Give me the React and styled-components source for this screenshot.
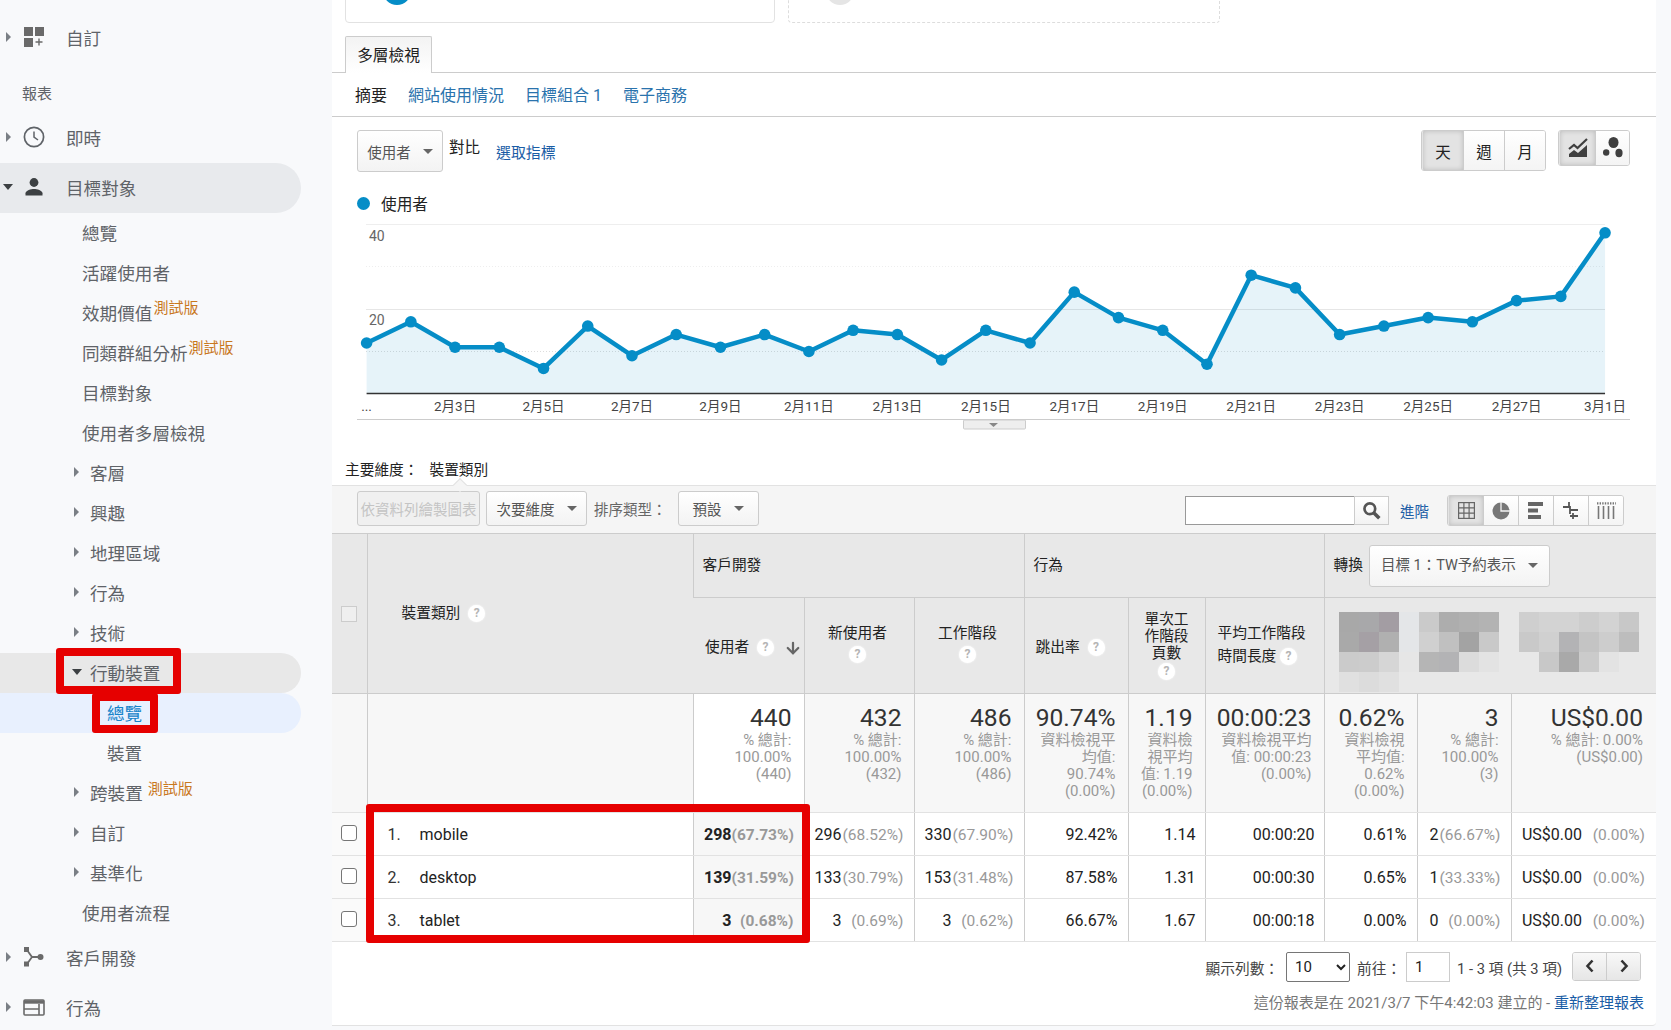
import React from 'react';
import styled, { createGlobalStyle } from 'styled-components';
import { ArrowDown } from 'lucide-react';

const FONT = `Roboto, "Noto Sans CJK TC", sans-serif`;

const GlobalStyle = createGlobalStyle`
  html, body { margin: 0; padding: 0; background: #f8f9fb; }
  body { font-family: ${FONT}; font-size: 15px; color: #222; }
  * { box-sizing: border-box; }
`;

const Page = styled.div`
  display: flex;
  width: 1671px;
  height: 1030px;
  overflow: hidden;
  background: #f8f9fb;
`;

/* ---------- sidebar ---------- */

const Sidebar = styled.nav`
  width: 332px;
  flex: none;
  padding-top: 13px;
  background: #f8f9fb;
  color: #5f6368;
  font-size: 17.6px;
`;

const NavRow = styled.div`
  position: relative;
  display: flex;
  align-items: center;
  width: 301px;
  height: ${({ $top }) => ($top ? '50px' : '40px')};
  padding: 0 0 2px ${({ $indent }) => $indent}px;
  border-radius: 0 25px 25px 0;
  white-space: nowrap;
  background: ${({ $bg }) => $bg || 'transparent'};
  color: ${({ $active }) => ($active ? '#1583c9' : 'inherit')};
`;

const NavLabel = styled.div`
  height: 50px;
  padding: 21px 0 0 22px;
  font-size: 15px;
  line-height: 20px;
`;

const Caret = styled.span`
  flex: none;
  width: 0;
  height: 0;
  margin-right: ${({ $gap }) => $gap}px;
  border-style: solid;
  ${({ $open }) =>
    $open
      ? 'border-width: 6px 5px 0 5px; border-color: #3c4043 transparent transparent transparent;'
      : 'border-width: 5px 0 5px 5px; border-color: transparent transparent transparent #7a7f85;'}
`;

const IconSlot = styled.span`
  flex: none;
  display: flex;
  justify-content: center;
  width: 22px;
  margin-right: 21px;
`;

const Beta = styled.span`
  align-self: flex-start;
  margin: ${({ $top }) => $top}px 0 0 ${({ $left }) => $left}px;
  font-size: 15px;
  line-height: 18px;
  color: #c9781e;
`;

const RedBox = styled.div`
  position: absolute;
  left: ${({ $x }) => $x}px;
  top: ${({ $y }) => $y}px;
  width: ${({ $w }) => $w}px;
  height: ${({ $h }) => $h}px;
  border: 8px solid #e60000;
  border-radius: 3px;
  z-index: 2;
  pointer-events: none;
`;

/* ---------- main column ---------- */

const Main = styled.main`
  width: 1324px;
  height: 1026px;
  flex: none;
  background: #fff;
  border-bottom: 1px solid #e2e2e2;
  border-radius: 0 0 4px 0;
`;

const CardsRow = styled.div`
  display: flex;
  align-items: flex-end;
  gap: 13px;
  height: 23px;
  padding-left: 13px;
  overflow: hidden;
`;

const Card = styled.div`
  display: flex;
  align-items: flex-end;
  width: ${({ $w }) => $w}px;
  height: 60px;
  flex: none;
  padding: 0 0 17px 37px;
  border: 1px ${({ $dashed }) => ($dashed ? 'dashed #ddd' : 'solid #e2e2e2')};
  border-radius: 0 0 4px 4px;
`;

const CardDot = styled.span`
  width: 28px;
  height: 28px;
  border-radius: 50%;
  background: ${({ $color }) => $color};
`;

const TabBar = styled.div`
  height: 50px;
  padding: 13px 0 0 13px;
  border-bottom: 1px solid #ccc;
`;

const Tab = styled.div`
  display: flex;
  align-items: center;
  justify-content: center;
  width: 87px;
  height: 37px;
  padding-bottom: 2px;
  border: 1px solid #ccc;
  border-bottom: 0;
  border-radius: 2px 2px 0 0;
  background: linear-gradient(#f3f3f3, #fff);
  font-size: 15.7px;
  color: #222;
`;

const SubNav = styled.div`
  display: flex;
  align-items: center;
  gap: 21px;
  height: 44px;
  padding: 0 0 2px 23px;
  border-bottom: 1px solid #ccc;
  font-size: 16px;
`;

const SubLink = styled.span`
  color: ${({ $current }) => ($current ? '#222' : '#2a73ad')};
`;

const ControlBar = styled.div`
  display: flex;
  justify-content: space-between;
  align-items: flex-start;
  height: 76px;
  padding: 13px 26px 0 25px;
`;

const ControlGroup = styled.div`
  display: flex;
  align-items: flex-start;
`;

const Button = styled.div`
  display: flex;
  align-items: center;
  justify-content: center;
  gap: 12px;
  width: ${({ $w }) => $w}px;
  height: ${({ $h }) => $h || 35}px;
  flex: none;
  margin-left: ${({ $ml }) => $ml || 0}px;
  border: 1px solid #ccc;
  border-radius: 3px;
  background: ${({ $disabled }) => ($disabled ? '#f0f0f0' : 'linear-gradient(#fff, #f3f3f3)')};
  color: ${({ $disabled }) => ($disabled ? '#c4c4c4' : '#555')};
  font-size: 14.5px;
  white-space: nowrap;
  overflow: hidden;
`;

const DownTri = styled.span`
  width: 0;
  height: 0;
  border-style: solid;
  border-width: 5px 5px 0 5px;
  border-color: #666 transparent transparent transparent;
`;

const Compare = styled.span`
  margin: 7px 16px 0 6px;
  font-size: 15.5px;
  line-height: 22px;
  color: #222;
`;

const PickLink = styled.a`
  margin-top: 12px;
  font-size: 14.9px;
  line-height: 22px;
  color: #1a5da6;
`;

const Segments = styled.div`
  display: flex;
  height: ${({ $h }) => $h}px;
  margin-left: ${({ $ml }) => $ml || 0}px;
  border: 1px solid #ccc;
  border-radius: 3px;
  overflow: hidden;
`;

const Segment = styled.div`
  display: flex;
  align-items: center;
  justify-content: center;
  width: ${({ $w }) => $w}px;
  flex: none;
  border-left: 1px solid ${({ $first }) => ($first ? 'transparent' : '#ccc')};
  background: ${({ $on }) => ($on ? '#e3e3e3' : 'linear-gradient(#fff, #f4f4f4)')};
  box-shadow: ${({ $on }) => ($on ? 'inset 0 0 5px rgba(0,0,0,.18)' : 'none')};
  font-size: 15.5px;
  color: #222;
`;

const Legend = styled.div`
  display: flex;
  align-items: center;
  gap: 11px;
  height: 20px;
  padding-left: 25px;
  font-size: 15.7px;
  color: #222;
`;

const LegendDot = styled.span`
  width: 13px;
  height: 13px;
  border-radius: 50%;
  background: #058dc7;
`;

const ChartBox = styled.div`
  height: 218px;
  svg { display: block; }
`;

const DimensionRow = styled.div`
  position: relative;
  display: flex;
  align-items: flex-end;
  gap: 11px;
  height: 55px;
  padding: 0 0 5px 13px;
  border-bottom: 1px solid #e2e2e2;
  font-size: 14.7px;
  line-height: 20px;
  color: #222;

  &::after {
    content: '';
    position: absolute;
    left: 123px;
    bottom: -5px;
    width: 9px;
    height: 9px;
    background: #f5f5f5;
    border-top: 1px solid #e2e2e2;
    border-left: 1px solid #e2e2e2;
    transform: rotate(45deg);
  }
`;

const Toolbar = styled.div`
  display: flex;
  justify-content: space-between;
  align-items: flex-start;
  height: 47px;
  padding: 5px 32px 0 25px;
  background: #f5f5f5;
`;

const ToolGroup = styled.div`
  display: flex;
  align-items: center;
  margin-top: ${({ $mt }) => $mt || 0}px;
`;

const ToolLabel = styled.span`
  margin: 0 11px 0 7px;
  font-size: 14.5px;
  color: #666;
  white-space: nowrap;
`;

const SearchInput = styled.input`
  width: 169px;
  height: 29px;
  padding: 0 4px;
  border: 1px solid #999;
  border-right: 0;
  background: #fff;
  outline: none;
`;

const SearchButton = styled.div`
  display: flex;
  align-items: center;
  justify-content: center;
  width: 35px;
  height: 29px;
  border: 1px solid #ccc;
  background: linear-gradient(#fff, #f3f3f3);
`;

const AdvancedLink = styled.a`
  margin: 0 18px 0 11px;
  font-size: 14.5px;
  color: #1a5da6;
`;

/* ---------- table ---------- */

const TableWrap = styled.div`
  position: relative;
`;

const Table = styled.table`
  width: 1324px;
  table-layout: fixed;
  border-collapse: collapse;
  font-family: ${FONT};
`;

const Col = styled.col`
  width: ${({ $w }) => $w}px;
`;

const Th = styled.th`
  height: ${({ $h }) => $h || 'auto'}${({ $h }) => ($h ? 'px' : '')};
  padding: ${({ $pad }) => $pad || '0 9px'};
  border: 1px solid #ccc;
  border-width: 1px 0 1px 1px;
  background: #e8e8e8;
  font-size: 14.7px;
  font-weight: 400;
  line-height: ${({ $lh }) => $lh || 17}px;
  text-align: ${({ $center }) => ($center ? 'center' : 'left')};
  vertical-align: middle;
  color: #222;
  overflow: hidden;

  &:first-child { border-left: 0; }
`;

const HeadFlex = styled.div`
  display: flex;
  align-items: center;
  gap: ${({ $gap }) => $gap ?? 8}px;
  white-space: nowrap;
`;

const Help = styled.span`
  display: inline-flex;
  align-items: center;
  justify-content: center;
  width: 17px;
  height: 17px;
  flex: none;
  border-radius: 50%;
  background: #fff;
  box-shadow: 0 0 2px #fff;
  font-size: 12px;
  font-weight: 700;
  color: #b5b5b5;
  vertical-align: middle;
`;

const HeadCheck = styled.span`
  display: block;
  width: 16px;
  height: 16px;
  margin: 0 auto;
  border: 1px solid #ccc;
  background: #efefef;
`;

const MosaicCell = styled(Th)`
  padding: 0;
  svg { display: block; }
`;

const TotalTd = styled.td`
  height: 119px;
  padding: 10px ${({ $pr }) => $pr || 12}px 0 4px;
  border-left: 1px solid #ccc;
  border-bottom: 1px solid #e2e2e2;
  background: ${({ $white }) => ($white ? '#fff' : '#f7f7f7')};
  text-align: right;
  vertical-align: top;

  &:first-child { border-left: 0; }
`;

const BigValue = styled.div`
  font-size: 24.6px;
  line-height: 28px;
  color: #333;
  white-space: nowrap;
`;

const SubLine = styled.div`
  font-size: 15px;
  line-height: 17px;
  color: #999;
  white-space: nowrap;
`;

const Td = styled.td`
  height: 43px;
  padding: 0 ${({ $pr }) => $pr ?? 10}px 0 0;
  border-left: 1px solid #ccc;
  border-bottom: 1px solid #e2e2e2;
  background: ${({ $shade }) => ($shade ? '#f7f7f7' : '#fff')};
  font-size: 16px;
  text-align: right;
  color: #222;
  white-space: nowrap;

  &:first-child { border-left: 0; padding: 0; text-align: center; background: #fafafa; }
`;

const NameCell = styled(Td)`
  padding: 0;
  text-align: left;
`;

const RowNo = styled.span`
  display: inline-block;
  width: 32px;
  margin-left: 20px;
  color: #333;
`;

const Num = styled.span`
  font-weight: ${({ $bold }) => ($bold ? 700 : 400)};
`;

const Pct = styled.span`
  display: inline-block;
  width: ${({ $w }) => $w || 62}px;
  font-size: 15.5px;
  text-align: right;
  color: #999;
  font-weight: ${({ $bold }) => ($bold ? 700 : 400)};
`;

const RowCheck = styled.input`
  appearance: none;
  display: block;
  width: 16px;
  height: 16px;
  margin: -2px auto 0;
  border: 1px solid #767676;
  border-radius: 3px;
  background: #fff;
`;

/* ---------- footer ---------- */

const PagerRow = styled.div`
  display: flex;
  justify-content: flex-end;
  align-items: center;
  height: 30px;
  margin-top: 10px;
  padding-right: 15px;
  font-size: 14.7px;
  color: #444;
  white-space: nowrap;
`;

const PageSelect = styled.select`
  width: 64px;
  height: 30px;
  margin: 0 7px;
  padding-left: 4px;
  border: 1px solid #767676;
  border-radius: 2px;
  background: #fff;
  font-family: ${FONT};
  font-size: 15px;
  color: #222;
`;

const PageInput = styled.input`
  width: 44px;
  height: 30px;
  margin: 0 7px 0 5px;
  padding-left: 8px;
  border: 1px solid #ccc;
  font-family: ${FONT};
  font-size: 15px;
  color: #222;
`;

const PagerButtons = styled.div`
  display: flex;
  width: 69px;
  height: 29px;
  margin: -2px 0 0 10px;
  border: 1px solid #ccc;
  border-radius: 3px;
  overflow: hidden;
`;

const PagerButton = styled.div`
  display: flex;
  flex: 1;
  align-items: center;
  justify-content: center;
  background: linear-gradient(#f8f8f8, #e6e6e6);

  & + & { border-left: 1px solid #ccc; }
`;

const Stamp = styled.div`
  margin-top: 11px;
  padding-right: 12px;
  font-size: 15px;
  line-height: 20px;
  text-align: right;
  color: #777;
`;

const RefreshLink = styled.a`
  color: #1a5da6;
`;

/* ---------- drawings ---------- */

const DashboardIcon = () => (
  <svg width="20" height="20" viewBox="0 0 20 20" fill="#6a6a6a">
    <rect x="0" y="0" width="9" height="9" />
    <rect x="11" y="0" width="9" height="9" />
    <rect x="0" y="11" width="9" height="9" />
    <path d="M15 11.5v7M11.5 15h7" stroke="#6a6a6a" strokeWidth="1.4" />
  </svg>
);

const ClockIcon = () => (
  <svg width="22" height="22" viewBox="0 0 22 22" fill="none" stroke="#5f6368">
    <circle cx="11" cy="11" r="9.6" strokeWidth="1.7" />
    <path d="M11 5.5V11l4 3" strokeWidth="1.5" />
  </svg>
);

const PersonIcon = () => (
  <svg width="20" height="20" viewBox="0 0 20 20" fill="#3c4043">
    <circle cx="10" cy="5.5" r="4.4" />
    <path d="M1.5 18.5v-2.2c0-3 5.6-4.4 8.5-4.4s8.5 1.4 8.5 4.4v2.2z" />
  </svg>
);

const AcquireIcon = () => (
  <svg width="20" height="20" viewBox="0 0 20 20" fill="#6a6a6a">
    <rect x="0" y="0" width="5" height="5" />
    <rect x="0" y="14.5" width="5" height="5" />
    <circle cx="16.5" cy="10" r="3" />
    <path d="M3 3l5 7h8M8 10l-5 7" fill="none" stroke="#6a6a6a" strokeWidth="1.8" />
  </svg>
);

const BehaviorIcon = () => (
  <svg width="22" height="17" viewBox="0 0 22 17" fill="none" stroke="#6a6a6a" strokeWidth="1.6">
    <rect x="1" y="1" width="20" height="15" rx="1" />
    <path d="M1 3h20" strokeWidth="3.4" />
    <path d="M1 10h15M16 5v11" />
  </svg>
);

const AreaIcon = () => (
  <svg width="20" height="20" viewBox="0 0 20 20">
    <path d="M1 11l5-4 3.5 3L19 1" fill="none" stroke="#3f3f3f" strokeWidth="2.2" />
    <path d="M1 16l5-4 4 3 9-8v12H1z" fill="#3f3f3f" />
  </svg>
);

const DotsIcon = () => (
  <svg width="22" height="24" viewBox="0 0 22 24" fill="#3f3f3f">
    <ellipse cx="11.5" cy="6.5" rx="5" ry="5.6" />
    <circle cx="4.2" cy="16.5" r="3.2" />
    <ellipse cx="17" cy="17" rx="3.6" ry="4.2" />
  </svg>
);

const SearchIcon = () => (
  <svg width="19" height="19" viewBox="0 0 17 17" fill="none" stroke="#555">
    <circle cx="7" cy="7" r="4.8" strokeWidth="2.4" />
    <path d="M10.5 10.5l5 5" strokeWidth="3.2" />
  </svg>
);

const GridIcon = () => (
  <svg width="17" height="17" viewBox="0 0 17 17" fill="none" stroke="#666" strokeWidth="1.2">
    <rect x=".6" y=".6" width="15.8" height="15.8" />
    <path d="M5.9.6v15.8M11.1.6v15.8M.6 5.9h15.8M.6 11.1h15.8" />
  </svg>
);

const PieIcon = () => (
  <svg width="18" height="18" viewBox="0 0 18 18">
    <circle cx="9" cy="9" r="8.5" fill="#777" />
    <path d="M9 0v9h9" fill="none" stroke="#f4f4f4" strokeWidth="1.3" />
  </svg>
);

const BarsIcon = () => (
  <svg width="16" height="17" viewBox="0 0 16 17" fill="#666">
    <rect x="0" y="0" width="15" height="4" />
    <rect x="0" y="6.5" width="10" height="4" />
    <rect x="0" y="13" width="13" height="4" />
  </svg>
);

const PivotIcon = () => (
  <svg width="16" height="17" viewBox="0 0 16 17" fill="none" stroke="#555" strokeWidth="1.8">
    <path d="M0 5h7v7M7 8h8M6 0v5M10 11v6M7 14h8" />
  </svg>
);

const ColumnsIcon = () => (
  <svg width="19" height="17" viewBox="0 0 19 17" fill="none" stroke="#777" strokeWidth="1.6">
    <path d="M0 1.4h19" strokeDasharray="1.4 1.2" strokeWidth="2.4" />
    <path d="M1.5 4v13M6.5 4v13M11.5 4v13M16.5 4v13" />
  </svg>
);

const Chevron = ({ dir }) => (
  <svg width="10" height="14" viewBox="0 0 10 14" fill="none" stroke="#333" strokeWidth="2.6">
    <path d={dir === 'left' ? 'M7.5 1.5L2.5 7l5 5.5' : 'M2.5 1.5L7.5 7l-5 5.5'} />
  </svg>
);

const VALUES = [12, 17, 11, 11, 6, 16, 9, 14, 11, 14, 10, 15, 14, 8, 15, 12, 24, 18, 15, 7, 28, 25, 14, 16, 18, 17, 22, 23, 38];
const X_LABELS = ['...', '2月3日', '2月5日', '2月7日', '2月9日', '2月11日', '2月13日', '2月15日', '2月17日', '2月19日', '2月21日', '2月23日', '2月25日', '2月27日', '3月1日'];

const LineChart = () => {
  const px = (i) => 34.6 + i * 44.23;
  const py = (v) => 180.9 - v * 4.24;
  const line = VALUES.map((v, i) => `${px(i)},${py(v)}`).join(' ');
  const last = px(VALUES.length - 1);

  return (
    <svg width="1324" height="218" viewBox="0 0 1324 218" fontFamily={FONT}>
      <line x1="34" x2={last} y1="11.5" y2="11.5" stroke="#eee" />
      <line x1="34" x2={last} y1="53.5" y2="53.5" stroke="#eee" strokeDasharray="1 2" />
      <line x1="34" x2={last} y1="96.5" y2="96.5" stroke="#e6e6e6" />
      <line x1="34" x2={last} y1="138.5" y2="138.5" stroke="#ddd" strokeDasharray="1 2" />
      <polygon points={`${px(0)},180.5 ${line} ${last},180.5`} fill="rgba(5,141,199,.1)" />
      <line x1={px(0)} x2={last} y1="180.5" y2="180.5" stroke="#333" strokeWidth="1.5" />
      <polyline points={line} fill="none" stroke="#058dc7" strokeWidth="4.5" strokeLinejoin="round" />
      {VALUES.map((v, i) => (
        <circle key={i} cx={px(i)} cy={py(v)} r="5.8" fill="#058dc7" />
      ))}
      <text x="37" y="28" fontSize="14" fill="#666">40</text>
      <text x="37" y="112" fontSize="14" fill="#666">20</text>
      {X_LABELS.map((label, i) => (
        <text key={label} x={px(i * 2)} y="198" fontSize="13.5" fill="#444" textAnchor="middle">{label}</text>
      ))}
      <line x1="25" x2="1298" y1="206.5" y2="206.5" stroke="#ccc" />
      <rect x="631.5" y="207" width="62" height="9" rx="1" fill="#eee" stroke="#ccc" />
      <path d="M657 210h9l-4.5 4z" fill="#888" />
    </svg>
  );
};

const MOSAIC_ROWS = [
  [14, ['#a8a8a8', '#a8a8aa', '#a39da3', '#e4e6e8'], 13],
  [14, ['#a9a9a9', '#a5a0a5', '#b0b0b0', '#e4e6e8'], 33],
  [14, ['#cbcbcb', '#cccccc', '#d6d6d6', '#e6e6e6'], 53],
  [14, ['#e0e0e0', '#dcdcdc', '#e0e0e0', '#e8e8e8'], 73],
  [94, ['#cacaca', '#adadad', '#b0b0b0', '#b3b3b3'], 13],
  [94, ['#d0d0d0', '#c0c0c0', '#a3a3a3', '#c9c9c9'], 33],
  [94, ['#b5b5b5', '#b3b3b5', '#dcdcdc', '#e3e3e3'], 53],
  [194, ['#cfcfcf', '#d3d3d3', '#d3d3d3', '#cdcdcd', '#d3d3d3', '#c8c8c8'], 13],
  [194, ['#c9c9c9', '#d0d0d0', '#b3b3b5', '#c4c4c4', '#cdcdcd', '#bdbdbd'], 33],
  [194, ['#e8e8e8', '#c8c8c8', '#a9a9a9', '#cbcbcb', '#e3e3e3', '#e8e8e8'], 53],
];

const Mosaic = () => (
  <svg width="331" height="94" viewBox="0 0 331 94">
    {MOSAIC_ROWS.map(([x, cells, y]) =>
      cells.map((color, i) => (
        <rect key={`${x}-${y}-${i}`} x={x + i * 20} y={y} width="20" height="20" fill={color} />
      ))
    )}
  </svg>
);

const TOTALS = [
  { value: '440', lines: ['% 總計:', '100.00%', '(440)'], white: true },
  { value: '432', lines: ['% 總計:', '100.00%', '(432)'] },
  { value: '486', lines: ['% 總計:', '100.00%', '(486)'] },
  { value: '90.74%', lines: ['資料檢視平', '均值:', '90.74%', '(0.00%)'] },
  { value: '1.19', lines: ['資料檢', '視平均', '值: 1.19', '(0.00%)'] },
  { value: '00:00:23', lines: ['資料檢視平均', '值: 00:00:23', '(0.00%)'] },
  { value: '0.62%', lines: ['資料檢視', '平均值:', '0.62%', '(0.00%)'] },
  { value: '3', lines: ['% 總計:', '100.00%', '(3)'] },
  { value: 'US$0.00', lines: ['% 總計: 0.00%', '(US$0.00)'], pr: 13 },
];

const ROWS = [
  { no: '1.', name: 'mobile', users: ['298', '(67.73%)'], fresh: ['296', '(68.52%)'], sessions: ['330', '(67.90%)'], bounce: '92.42%', pages: '1.14', time: '00:00:20', rate: '0.61%', goal: ['2', '(66.67%)'] },
  { no: '2.', name: 'desktop', users: ['139', '(31.59%)'], fresh: ['133', '(30.79%)'], sessions: ['153', '(31.48%)'], bounce: '87.58%', pages: '1.31', time: '00:00:30', rate: '0.65%', goal: ['1', '(33.33%)'] },
  { no: '3.', name: 'tablet', users: ['3', '(0.68%)'], fresh: ['3', '(0.69%)'], sessions: ['3', '(0.62%)'], bounce: '66.67%', pages: '1.67', time: '00:00:18', rate: '0.00%', goal: ['0', '(0.00%)'] },
];

const COL_WIDTHS = [35, 326, 111, 110, 110, 104, 77, 119, 93, 94, 145];

const App = () => (
  <Page>
    <GlobalStyle />

    <Sidebar>
      <NavRow $top $indent={6}>
        <Caret $gap={12} /><IconSlot><DashboardIcon /></IconSlot>自訂
      </NavRow>
      <NavLabel>報表</NavLabel>
      <NavRow $top $indent={6}>
        <Caret $gap={12} /><IconSlot><ClockIcon /></IconSlot>即時
      </NavRow>
      <NavRow $top $indent={3} $bg="#e8eaed">
        <Caret $open $gap={10} /><IconSlot><PersonIcon /></IconSlot>目標對象
      </NavRow>
      <NavRow $indent={82}>總覽</NavRow>
      <NavRow $indent={82}>活躍使用者</NavRow>
      <NavRow $indent={82}>效期價值<Beta $left={1} $top={6}>測試版</Beta></NavRow>
      <NavRow $indent={82}>同類群組分析<Beta $left={1} $top={6}>測試版</Beta></NavRow>
      <NavRow $indent={82}>目標對象</NavRow>
      <NavRow $indent={82}>使用者多層檢視</NavRow>
      <NavRow $indent={74}><Caret $gap={11} />客層</NavRow>
      <NavRow $indent={74}><Caret $gap={11} />興趣</NavRow>
      <NavRow $indent={74}><Caret $gap={11} />地理區域</NavRow>
      <NavRow $indent={74}><Caret $gap={11} />行為</NavRow>
      <NavRow $indent={74}><Caret $gap={11} />技術</NavRow>
      <NavRow $indent={72} $bg="#e8e8e8">
        <Caret $open $gap={8} />行動裝置
        <RedBox $x={56} $y={-5} $w={125} $h={46} />
      </NavRow>
      <NavRow $indent={107} $active $bg="#e8f0fe">
        總覽
        <RedBox $x={92} $y={0} $w={66} $h={40} />
      </NavRow>
      <NavRow $indent={107}>裝置</NavRow>
      <NavRow $indent={74}><Caret $gap={11} />跨裝置<Beta $left={5} $top={7}>測試版</Beta></NavRow>
      <NavRow $indent={74}><Caret $gap={11} />自訂</NavRow>
      <NavRow $indent={74}><Caret $gap={11} />基準化</NavRow>
      <NavRow $indent={82}>使用者流程</NavRow>
      <NavRow $top $indent={6}>
        <Caret $gap={12} /><IconSlot><AcquireIcon /></IconSlot>客戶開發
      </NavRow>
      <NavRow $top $indent={6}>
        <Caret $gap={12} /><IconSlot><BehaviorIcon /></IconSlot>行為
      </NavRow>
    </Sidebar>

    <Main>
      <CardsRow>
        <Card $w={430}><CardDot $color="#058dc7" /></Card>
        <Card $w={432} $dashed><CardDot $color="#e5e5e5" /></Card>
      </CardsRow>

      <TabBar><Tab>多層檢視</Tab></TabBar>

      <SubNav>
        <SubLink $current>摘要</SubLink>
        <SubLink>網站使用情況</SubLink>
        <SubLink>目標組合 1</SubLink>
        <SubLink>電子商務</SubLink>
      </SubNav>

      <ControlBar>
        <ControlGroup>
          <Button $w={86} $h={42}>使用者<DownTri /></Button>
          <Compare>對比</Compare>
          <PickLink>選取指標</PickLink>
        </ControlGroup>
        <ControlGroup>
          <Segments $h={41}>
            <Segment $w={41} $first $on>天</Segment>
            <Segment $w={41}>週</Segment>
            <Segment $w={41}>月</Segment>
          </Segments>
          <Segments $h={36} $ml={12}>
            <Segment $w={36} $first $on><AreaIcon /></Segment>
            <Segment $w={34}><DotsIcon /></Segment>
          </Segments>
        </ControlGroup>
      </ControlBar>

      <Legend><LegendDot />使用者</Legend>

      <ChartBox><LineChart /></ChartBox>

      <DimensionRow>
        <span>主要維度：</span>
        <span>裝置類別</span>
      </DimensionRow>

      <Toolbar>
        <ToolGroup>
          <Button $w={123} $disabled>依資料列繪製圖表</Button>
          <Button $w={101} $ml={6}>次要維度<DownTri /></Button>
          <ToolLabel>排序類型：</ToolLabel>
          <Button $w={81}>預設<DownTri /></Button>
        </ToolGroup>
        <ToolGroup $mt={4}>
          <SearchInput />
          <SearchButton><SearchIcon /></SearchButton>
          <AdvancedLink>進階</AdvancedLink>
          <Segments $h={31}>
            <Segment $w={35} $first $on><GridIcon /></Segment>
            <Segment $w={35}><PieIcon /></Segment>
            <Segment $w={35}><BarsIcon /></Segment>
            <Segment $w={35}><PivotIcon /></Segment>
            <Segment $w={35}><ColumnsIcon /></Segment>
          </Segments>
        </ToolGroup>
      </Toolbar>

      <TableWrap>
        <Table>
          <colgroup>
            {COL_WIDTHS.map((w, i) => <Col key={i} $w={w} />)}
          </colgroup>
          <thead>
            <tr>
              <Th rowSpan={2}><HeadCheck /></Th>
              <Th rowSpan={2} $pad="0 0 0 34px"><HeadFlex>裝置類別<Help>?</Help></HeadFlex></Th>
              <Th colSpan={3} $h={64}>客戶開發</Th>
              <Th colSpan={3}>行為</Th>
              <Th colSpan={3}>
                <HeadFlex $gap={0}>
                  轉換
                  <Button $w={181} $h={42} $ml={6}>目標 1：TW予約表示<DownTri /></Button>
                </HeadFlex>
              </Th>
            </tr>
            <tr>
              <Th $h={96} $pad="4px 0 0 12px">
                <HeadFlex>使用者<Help>?</Help><ArrowDown size={18} strokeWidth={3} color="#666" style={{ marginLeft: 2 }} /></HeadFlex>
              </Th>
              <Th $center $lh={21} $pad="0 11px 4px 8px">新使用者<br /><Help>?</Help></Th>
              <Th $center $lh={21} $pad="0 11px 4px 8px">工作階段<br /><Help>?</Help></Th>
              <Th $pad="4px 0 0 11px"><HeadFlex>跳出率<Help>?</Help></HeadFlex></Th>
              <Th $center $pad="0">單次工<br />作階段<br />頁數<br /><Help>?</Help></Th>
              <Th $pad="0 0 2px 12px" $lh={23}>平均工作階段<br />時間長度 <Help>?</Help></Th>
              <MosaicCell colSpan={3}><Mosaic /></MosaicCell>
            </tr>
          </thead>
          <tbody>
            <tr>
              <TotalTd />
              <TotalTd />
              {TOTALS.map((t) => (
                <TotalTd key={t.value} $white={t.white} $pr={t.pr}>
                  <BigValue>{t.value}</BigValue>
                  {t.lines.map((line, i) => <SubLine key={i}>{line}</SubLine>)}
                </TotalTd>
              ))}
            </tr>
            {ROWS.map((r) => (
              <tr key={r.no}>
                <Td><RowCheck type="checkbox" /></Td>
                <NameCell><RowNo>{r.no}</RowNo>{r.name}</NameCell>
                <Td $shade><Num $bold>{r.users[0]}</Num><Pct $bold>{r.users[1]}</Pct></Td>
                <Td><Num>{r.fresh[0]}</Num><Pct>{r.fresh[1]}</Pct></Td>
                <Td><Num>{r.sessions[0]}</Num><Pct>{r.sessions[1]}</Pct></Td>
                <Td>{r.bounce}</Td>
                <Td $pr={9}>{r.pages}</Td>
                <Td $pr={9}>{r.time}</Td>
                <Td>{r.rate}</Td>
                <Td><Num>{r.goal[0]}</Num><Pct>{r.goal[1]}</Pct></Td>
                <Td $pr={11}><Num>US$0.00</Num><Pct $w={63}>(0.00%)</Pct></Td>
              </tr>
            ))}
          </tbody>
        </Table>
        <RedBox $x={34} $y={271} $w={444} $h={139} />
      </TableWrap>

      <PagerRow>
        顯示列數：
        <PageSelect defaultValue="10">
          <option value="10">10</option>
          <option value="25">25</option>
          <option value="50">50</option>
        </PageSelect>
        前往：
        <PageInput defaultValue="1" />
        1 - 3 項 (共 3 項)
        <PagerButtons>
          <PagerButton><Chevron dir="left" /></PagerButton>
          <PagerButton><Chevron dir="right" /></PagerButton>
        </PagerButtons>
      </PagerRow>

      <Stamp>這份報表是在 2021/3/7 下午4:42:03 建立的 - <RefreshLink>重新整理報表</RefreshLink></Stamp>
    </Main>
  </Page>
);

export default App;
